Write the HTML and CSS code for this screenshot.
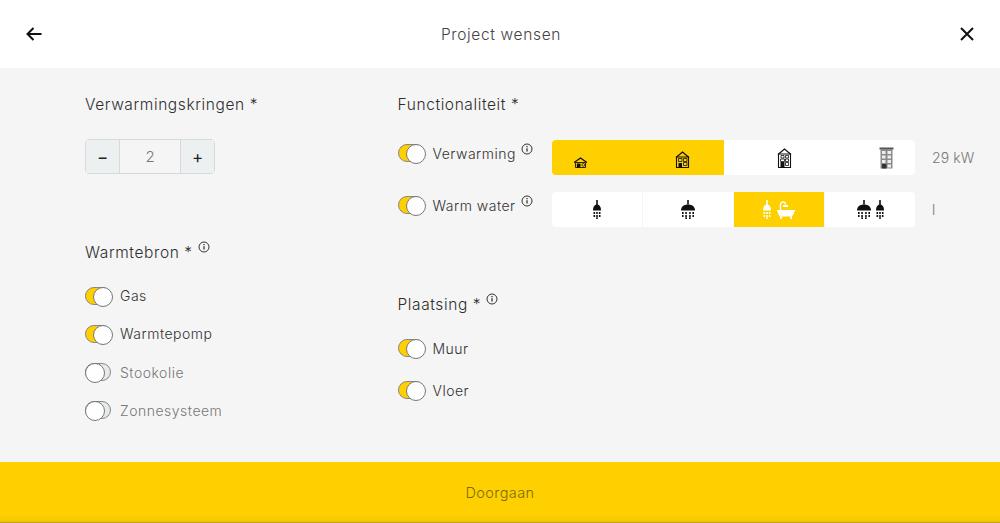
FILE: index.html
```html
<!DOCTYPE html>
<html lang="en">
<head>
  <meta charset="UTF-8" />
  <meta name="viewport" content="width=device-width, initial-scale=1.0" />
  <title>Project wensen</title>
  <link rel="stylesheet" href="styles.css">
</head>
<body>
  <svg class="defs" width="0" height="0">
    <symbol id="info" viewBox="0 0 12 12">
      <circle cx="6" cy="6" r="5" fill="none" stroke="currentColor" stroke-width="1"/>
      <path d="M6 5.200v3.400M6 3v1.200" fill="none" stroke="currentColor" stroke-width="1.300"/>
    </symbol>
    <symbol id="house-s" viewBox="0 0 16 12">
      <path d="M1 6 8 1l7 5" fill="none" stroke="currentColor" stroke-width="1.400"/>
      <path d="M2.500 6h11v5.500h-11z" fill="none" stroke="currentColor" stroke-width="1"/>
      <path d="M4 7h4v4.500H4z" fill="currentColor"/>
      <circle cx="11" cy="8.600" r="1.500" fill="none" stroke="currentColor" stroke-width=".8"/>
    </symbol>
    <symbol id="house-m" viewBox="0 0 15 17">
      <path d="M1 6.500 7.500 1 14 6.500" fill="none" stroke="currentColor" stroke-width="1.300"/>
      <path d="M1.500 6h12v10.500h-12z" fill="none" stroke="currentColor" stroke-width="1.100"/>
      <path d="M3.500 12h3.500v4.500H3.500z" fill="currentColor"/>
      <path d="M3.500 7.500h3.500v3H3.500zM8.500 7.500h3.500v3H8.500zM8.500 11.500h3.500v3H8.500z" fill="none" stroke="currentColor" stroke-width=".8"/>
    </symbol>
    <symbol id="house-l" viewBox="0 0 15 20">
      <path d="M1 6.500 7.500 1 14 6.500" fill="none" stroke="currentColor" stroke-width="1.300"/>
      <path d="M1.500 6h12v13.500h-12z" fill="none" stroke="currentColor" stroke-width="1.100"/>
      <path d="M3.500 14h4v5.500h-4z" fill="currentColor"/>
      <path d="M4 7.500h3v2.500H4zM8.500 7.500h3v2.500h-3zM3.500 11h4v2.500h-4zM8.500 11h3v2.500h-3zM8.500 14.500h3v3h-3z" fill="none" stroke="currentColor" stroke-width=".8"/>
    </symbol>
    <symbol id="block" viewBox="0 0 15 22">
      <path d="M.5.500h14v2H.5z" fill="#555"/>
      <path d="M1.500 2h12v19.500h-12z" fill="#8a8a8a"/>
      <path d="M3 4h3.500v3H3zM8.500 4H12v3H8.500zM3 8.500h3.500v3H3zM8.500 8.500H12v3H8.500zM3 13h3.500v3H3zM8.500 13H12v3H8.500zM8.500 17.500H12v3H8.500z" fill="#eee"/>
      <path d="M3 17h4.500v4.500H3z" fill="currentColor"/>
    </symbol>
    <symbol id="shower-s" viewBox="0 0 8 19">
      <path d="M3.200 0h1.600v5h-1.600z" fill="currentColor"/>
      <path d="M0 10.500C0 7 1.500 4.500 4 4.500s4 2.500 4 6z" fill="currentColor"/>
      <path d="M.5 12h1.600v2H.5zM3.200 12h1.600v2H3.200zM5.900 12h1.600v2H5.900zM.5 15h1.600v2H.5zM3.200 15h1.600v2H3.200zM5.900 15h1.600v2H5.900zM3.200 17.300h1.600V19H3.200z" fill="currentColor"/>
    </symbol>
    <symbol id="shower-m" viewBox="0 0 14 19">
      <path d="M6.200 0h1.600v4.500H6.200z" fill="currentColor"/>
      <path d="M0 10.500C0 6.500 3 4.500 7 4.500s7 2 7 6z" fill="currentColor"/>
      <path d="M1 12h1.600v2H1zM4.300 12h1.600v2H4.300zM8.100 12h1.600v2H8.100zM11.400 12H13v2h-1.600zM1 15h1.600v2H1zM4.300 15h1.600v2H4.300zM8.100 15h1.600v2H8.100zM11.400 15H13v2h-1.600zM4.300 17.300h1.600V19H4.300zM8.100 17.300h1.600V19H8.100z" fill="currentColor"/>
    </symbol>
    <symbol id="bath" viewBox="0 0 18 18">
      <path d="M3.500 9V3.500a2.500 2.500 0 0 1 5 0" fill="none" stroke="currentColor" stroke-width="1.400"/>
      <path d="M6 4h5v2H6z" fill="currentColor"/>
      <path d="M0 9h18v1.800h-.8c-.2 3-1.800 4.700-4.200 4.700H5c-2.400 0-4-1.700-4.200-4.700H0z" fill="currentColor"/>
      <path d="M3 15h1.700v3H3zM13.300 15H15v3h-1.700z" fill="currentColor"/>
    </symbol>
  </svg>

  <header class="topbar">
    <svg class="topbar-icon" viewBox="0 0 16 14" width="16" height="14">
      <path d="M15.500 7H2M7.500 1 1.500 7l6 6" fill="none" stroke="#111" stroke-width="2"/>
    </svg>
    <h1 class="topbar-title">Project wensen</h1>
    <svg class="topbar-icon" viewBox="0 0 14 14" width="14" height="14">
      <path d="M1 1l12 12M13 1 1 13" fill="none" stroke="#111" stroke-width="2"/>
    </svg>
  </header>

  <main class="content">
    <section class="col-left">
      <h2 class="label-title">Verwarmingskringen *</h2>
      <div class="stepper">
        <span class="step-btn">&minus;</span>
        <span class="step-value">2</span>
        <span class="step-btn">+</span>
      </div>

      <h2 class="label-title source-title">Warmtebron * <svg class="info"><use href="#info"/></svg></h2>
      <div class="option-list">
        <div class="option"><span class="toggle on"></span>Gas</div>
        <div class="option"><span class="toggle on"></span>Warmtepomp</div>
        <div class="option off"><span class="toggle"></span>Stookolie</div>
        <div class="option off"><span class="toggle"></span>Zonnesysteem</div>
      </div>
    </section>

    <section class="col-right">
      <h2 class="label-title">Functionaliteit *</h2>

      <div class="func-row">
        <div class="option func-name"><span class="toggle on"></span>Verwarming <svg class="info"><use href="#info"/></svg></div>
        <div class="segments">
          <div class="segment heat-low active">
            <svg class="icon-house-s"><use href="#house-s"/></svg>
            <svg class="icon-house-m"><use href="#house-m"/></svg>
          </div>
          <div class="segment heat-high">
            <svg class="icon-house-l"><use href="#house-l"/></svg>
            <svg class="icon-block"><use href="#block"/></svg>
          </div>
        </div>
        <span class="func-value">29 kW</span>
      </div>

      <div class="func-row">
        <div class="option func-name"><span class="toggle on"></span>Warm water <svg class="info"><use href="#info"/></svg></div>
        <div class="segments">
          <div class="segment center"><svg class="icon-shower-s"><use href="#shower-s"/></svg></div>
          <div class="segment center"><svg class="icon-shower-m"><use href="#shower-m"/></svg></div>
          <div class="segment center active white">
            <svg class="icon-shower-s"><use href="#shower-s"/></svg>
            <svg class="icon-bath"><use href="#bath"/></svg>
          </div>
          <div class="segment center">
            <svg class="icon-shower-m"><use href="#shower-m"/></svg>
            <svg class="icon-shower-s"><use href="#shower-s"/></svg>
          </div>
        </div>
        <span class="func-value">l</span>
      </div>

      <h2 class="label-title place-title">Plaatsing * <svg class="info"><use href="#info"/></svg></h2>
      <div class="option-list place-list">
        <div class="option"><span class="toggle on"></span>Muur</div>
        <div class="option"><span class="toggle on"></span>Vloer</div>
      </div>
    </section>
  </main>

  <footer class="next-bar">Doorgaan</footer>
</body>
</html>
```

FILE: styles.css
```css
* {
  box-sizing: border-box;
}
html, body {
  height: 100%;
}
body {
  font-family: Inter, 'Noto Sans', sans-serif;
  font-weight: 300;
  margin: 0;
  background: #f5f5f5;
  color: #333;
  display: flex;
  flex-direction: column;
  overflow: hidden;
}
.defs {
  display: block;
  height: 0;
}
.topbar {
  height: 68px;
  flex: none;
  background: #fff;
  display: flex;
  align-items: center;
  justify-content: space-between;
  padding: 0 26px;
}
.topbar-icon {
  flex: none;
}
.topbar-title {
  margin: 0;
  font-size: 15.5px;
  font-weight: 300;
  letter-spacing: 0.65px;
  color: #444;
}
.content {
  flex: 1;
  display: grid;
  grid-template-columns: 312.5px 1fr;
  padding: 27px 0 0 85px;
}
.label-title {
  margin: 0;
  font-size: 15.5px;
  line-height: 20px;
  font-weight: 300;
  letter-spacing: 0.6px;
  color: #2e2e2e;
}
.info {
  width: 12px;
  height: 12px;
  color: #333;
  vertical-align: 5px;
}
.stepper {
  margin-top: 24px;
  width: 130px;
  height: 35px;
  display: flex;
  border: 1px solid #d5d9d9;
  border-radius: 4px;
  background: #f5f5f5;
}
.step-btn {
  width: 33px;
  background: #ecf0f0;
  display: flex;
  align-items: center;
  justify-content: center;
  font-size: 17px;
  font-weight: 400;
  color: #222;
}
.step-value {
  flex: 1;
  border-left: 1px solid #d5d9d9;
  border-right: 1px solid #d5d9d9;
  display: flex;
  align-items: center;
  justify-content: center;
  font-size: 15px;
  color: #777;
}
.source-title {
  margin-top: 67px;
}
.option-list {
  margin-top: 23.5px;
  display: flex;
  flex-direction: column;
  gap: 20.3px;
}
.option {
  display: flex;
  align-items: center;
  height: 18px;
  font-size: 14px;
  letter-spacing: 0.5px;
  color: #333;
}
.option.off {
  color: #777;
}
.toggle {
  position: relative;
  flex: none;
  width: 26px;
  height: 18px;
  margin-right: 9px;
  border: 1px solid #888;
  border-radius: 9px;
  background: #e6eaea;
}
.toggle::after {
  content: "";
  position: absolute;
  top: -1px;
  left: -1px;
  width: 18px;
  height: 18px;
  border: 1px solid #777;
  border-radius: 50%;
  background: #fff;
}
.toggle.on {
  background: #ffd000;
}
.toggle.on::after {
  left: 7px;
}
.func-row {
  display: flex;
  align-items: center;
  height: 35px;
  margin-top: 17px;
}
.label-title + .func-row {
  margin-top: 25px;
}
.func-name {
  width: 154.5px;
  flex: none;
  height: 35px;
  margin-top: -9px;
}
.func-name .info {
  margin: 0 0 8px 5px;
}
.segments {
  width: 363px;
  height: 35px;
  flex: none;
  display: flex;
  gap: 1px;
  background: #f5f5f5;
  border-radius: 4px;
  overflow: hidden;
  color: #111;
}
.segment {
  flex: 1;
  background: #fff;
  display: flex;
  align-items: center;
}
.heat-low {
  flex: 0 0 172px;
  justify-content: space-between;
  padding: 0 34px 0 21px;
}
.heat-high {
  justify-content: space-between;
  padding: 0 21px 0 53px;
  margin-left: -1px;
}
.segment.center {
  justify-content: center;
  gap: 5px;
}
.segment.active {
  background: #ffd000;
}
.segment.white {
  color: #fff;
  gap: 6px;
}
.func-value {
  margin-left: 17px;
  font-size: 14px;
  letter-spacing: 0.1px;
  color: #777;
}
.icon-house-s {
  width: 15px;
  height: 11px;
  margin-top: 9px;
}
.icon-house-m {
  width: 15px;
  height: 17px;
  margin-top: 3px;
}
.icon-house-l {
  width: 15px;
  height: 20px;
}
.icon-block {
  width: 15px;
  height: 22px;
  color: #333;
}
.icon-shower-s {
  width: 8px;
  height: 19px;
}
.icon-shower-m {
  width: 14px;
  height: 19px;
}
.icon-bath {
  width: 18px;
  height: 18px;
}
.place-title {
  margin-top: 66px;
}
.place-list {
  margin-top: 24px;
  gap: 24px;
}
.next-bar {
  height: 61px;
  flex: none;
  display: flex;
  align-items: center;
  justify-content: center;
  font-size: 14.5px;
  letter-spacing: 0.4px;
  color: #7d6a10;
  background: linear-gradient(to bottom, #ffd000 85%, #f5c800 97%, #b09a20);
}
```
